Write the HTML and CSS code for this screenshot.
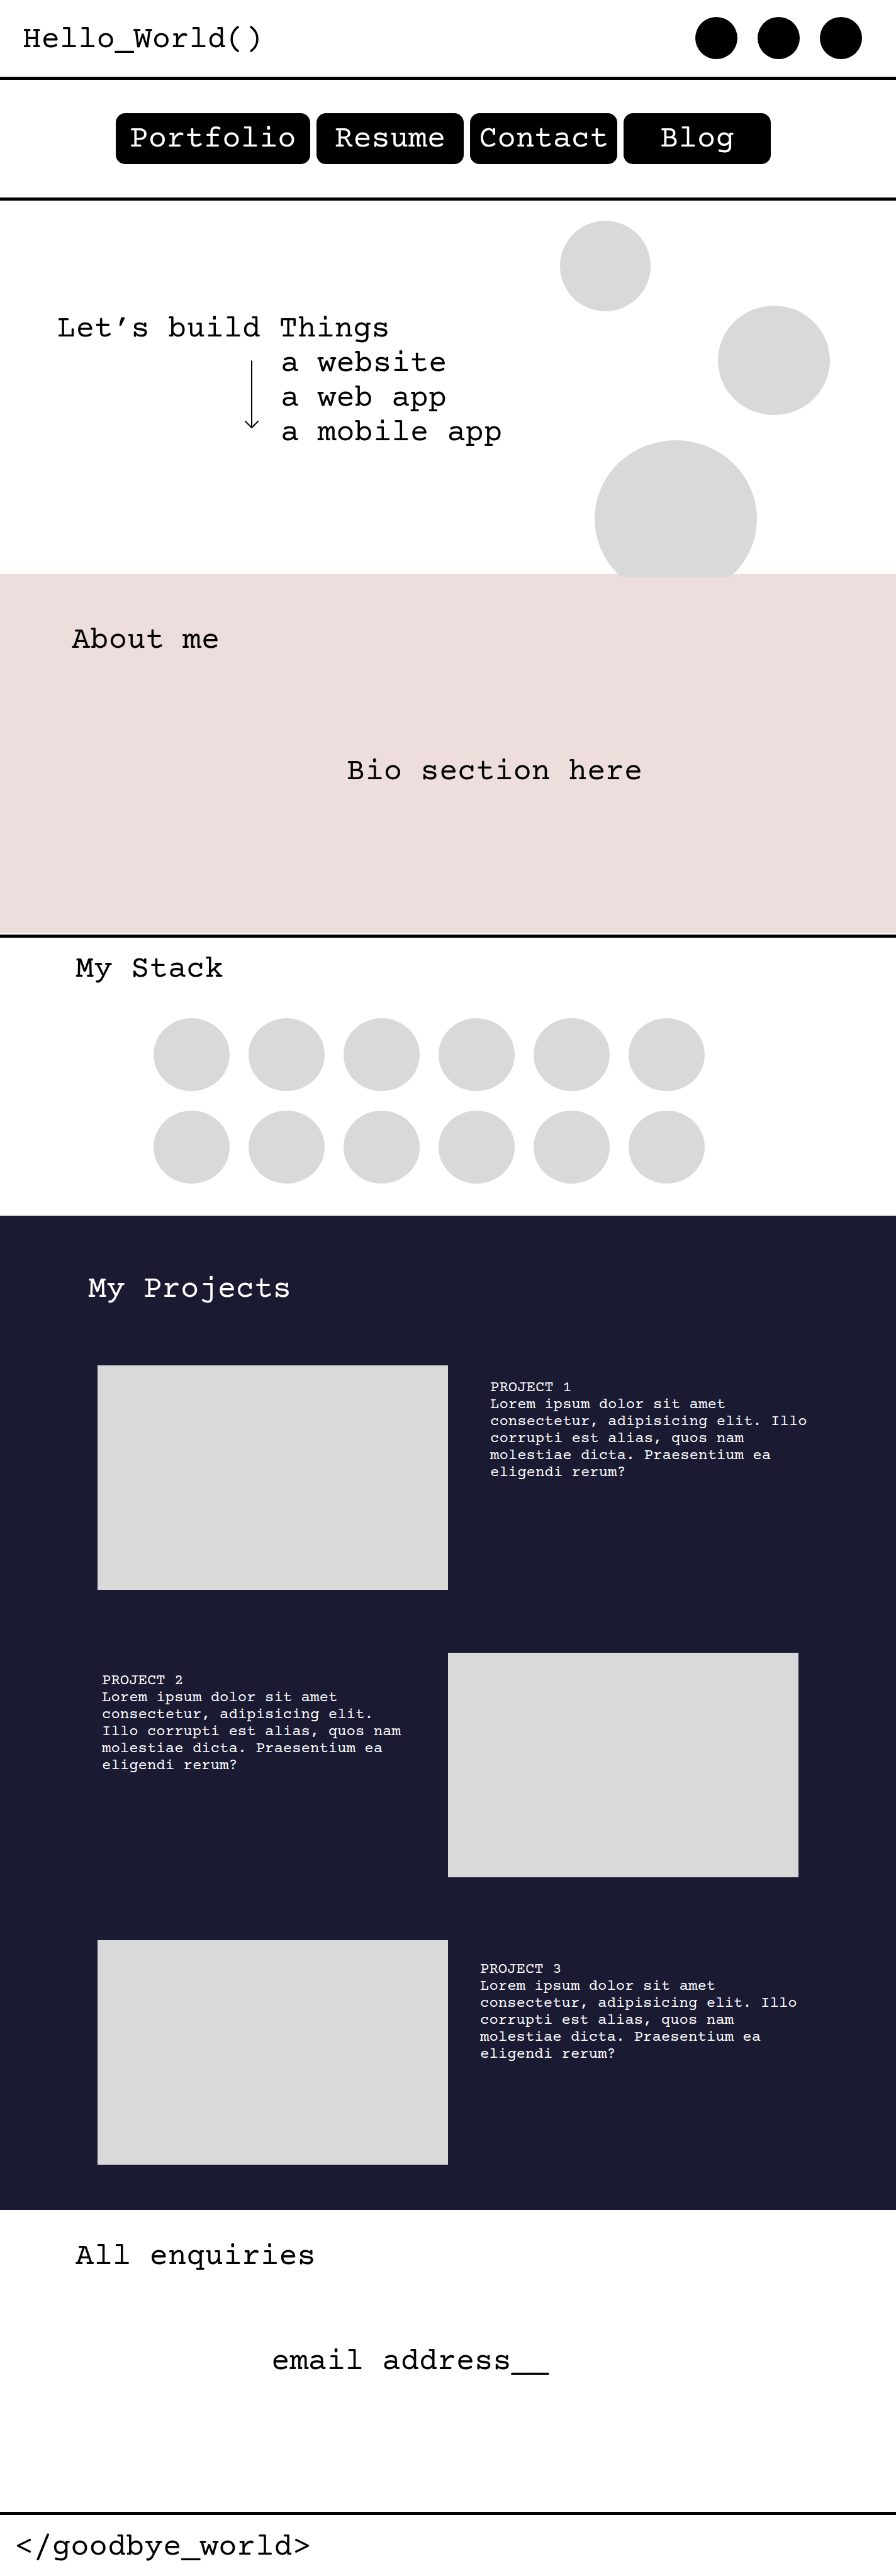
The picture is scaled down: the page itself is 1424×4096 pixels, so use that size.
FILE: index.html
```html
<!DOCTYPE html>
<html lang="en">
<head>
  <meta charset="utf-8">
  <meta name="viewport" content="width=device-width, initial-scale=1">
  <title>Hello_World()</title>
  <link rel="stylesheet" href="styles.css">
</head>
<body>
  <header class="header">
    <h1 class="title">Hello_World()</h1>
    <div class="dots">
      <span class="dot"></span>
      <span class="dot"></span>
      <span class="dot"></span>
    </div>
  </header>

  <nav class="nav">
    <a class="nav-link nav-link-wide" href="#projects">Portfolio</a>
    <a class="nav-link" href="#about">Resume</a>
    <a class="nav-link" href="#contact">Contact</a>
    <a class="nav-link" href="#stack">Blog</a>
  </nav>

  <main>
    <section class="hero">
      <div class="hero-text">
        <p>Let’s build Things</p>
        <div class="hero-things">
          <svg class="arrow" width="24" height="109" viewBox="0 0 24 109" fill="none" stroke="#000" stroke-width="2" stroke-linecap="round" stroke-linejoin="round" aria-hidden="true">
            <path d="M12 1V107M2 97L12 107L22 97"/>
          </svg>
          <ul class="things">
            <li>a website</li>
            <li>a web app</li>
            <li>a mobile app</li>
          </ul>
        </div>
      </div>
      <svg class="bubbles" width="430" height="566" viewBox="0 0 430 566" fill="#d9d9d9" aria-hidden="true">
        <circle cx="72" cy="72" r="72"/>
        <ellipse cx="340" cy="222" rx="89" ry="87"/>
        <ellipse cx="184" cy="474" rx="129" ry="125"/>
      </svg>
    </section>

    <section class="about" id="about">
      <h2 class="title">About me</h2>
      <p class="bio">Bio section here</p>
    </section>

    <section class="stack" id="stack">
      <h2 class="title">My Stack</h2>
      <div class="stack-grid">
        <span class="tech"></span><span class="tech"></span><span class="tech"></span>
        <span class="tech"></span><span class="tech"></span><span class="tech"></span>
        <span class="tech"></span><span class="tech"></span><span class="tech"></span>
        <span class="tech"></span><span class="tech"></span><span class="tech"></span>
      </div>
    </section>

    <section class="projects" id="projects">
      <h2 class="title projects-title">My Projects</h2>
      <div class="project-list">
        <article class="project">
          <div class="shot"></div>
          <div class="blurb blurb-first">
            <h3 class="project-name">PROJECT 1</h3>
            <p>Lorem ipsum dolor sit amet consectetur, adipisicing elit. Illo corrupti est alias, quos nam molestiae dicta. Praesentium ea eligendi rerum?</p>
          </div>
        </article>
        <article class="project">
          <div class="blurb blurb-left">
            <h3 class="project-name">PROJECT 2</h3>
            <p>Lorem ipsum dolor sit amet consectetur, adipisicing elit. Illo corrupti est alias, quos nam molestiae dicta. Praesentium ea eligendi rerum?</p>
          </div>
          <div class="shot"></div>
        </article>
        <article class="project">
          <div class="shot"></div>
          <div class="blurb blurb-last">
            <h3 class="project-name">PROJECT 3</h3>
            <p>Lorem ipsum dolor sit amet consectetur, adipisicing elit. Illo corrupti est alias, quos nam molestiae dicta. Praesentium ea eligendi rerum?</p>
          </div>
        </article>
      </div>
    </section>

    <section class="contact" id="contact">
      <h2 class="title">All enquiries</h2>
      <p class="email">email address__</p>
    </section>
  </main>

  <footer class="footer">&lt;/goodbye_world&gt;</footer>
</body>
</html>
```

FILE: styles.css
```css
* {
  box-sizing: border-box;
  margin: 0;
  padding: 0;
}

body {
  background: #fff;
  color: #000;
  font-family: "Courier Prime", "Liberation Mono", monospace;
  font-size: 49px;
  line-height: 55px;
}

.title {
  font-size: 49px;
  font-weight: 400;
}

/* Header */
.header {
  display: flex;
  align-items: flex-start;
  justify-content: space-between;
  padding: 27px 54px 28px 36px;
  border-bottom: 5px solid #000;
}

.header .title {
  padding-top: 10px;
}

.dots {
  display: flex;
  gap: 32px;
}

.dot {
  width: 67px;
  height: 67px;
  border-radius: 50%;
  background: #000;
}

/* Navigation */
.nav {
  display: flex;
  gap: 10px;
  padding: 53px 184px;
  border-bottom: 5px solid #000;
}

.nav-link {
  width: 234px;
  padding: 15px 0 11px;
  border-radius: 15px;
  background: #000;
  color: #fff;
  text-align: center;
  text-decoration: none;
}

.nav-link-wide {
  width: 309px;
}

/* Hero: the bubbles run slightly over the section below */
.hero {
  display: flex;
  align-items: flex-start;
  justify-content: space-between;
  position: relative;
  z-index: 1;
  padding: 32px 104px 0 91px;
}

.hero-text {
  padding-top: 146px;
}

.hero-things {
  display: flex;
  gap: 34px;
  padding-left: 297px;
}

.arrow {
  margin-top: 21px;
}

.things {
  list-style: none;
}

.bubbles {
  display: block;
  margin-bottom: -4px;
}

/* About */
.about {
  padding: 79px 114px 228px;
  background: #eddddd;
}

.bio {
  padding: 154px 0 0 437px;
}

/* Stack */
.stack {
  margin-top: 2px;
  padding: 24px 120px 51px;
  border-top: 5px solid #000;
}

.stack-grid {
  display: grid;
  grid-template-columns: repeat(6, 121px);
  gap: 31px 30px;
  padding: 49px 0 0 124px;
}

.tech {
  height: 116px;
  border-radius: 50%;
  background: #d9d9d9;
}

/* Projects */
.projects {
  padding: 91px 155px 72px;
  background: #1a1a33;
  color: #fff;
}

.projects-title {
  margin-left: -15px;
}

.project-list {
  display: grid;
  gap: 100px;
  padding-top: 92px;
}

.project {
  display: grid;
  grid-template-columns: repeat(2, minmax(0, 1fr));
  font-size: 24px;
  line-height: 27px;
}

.project-name {
  font-size: 24px;
  font-weight: 400;
}

.shot {
  height: 357px;
  background: #d9d9d9;
}

.blurb {
  width: 36ch;
}

.blurb-first {
  margin: 22px 0 0 67px;
}

.blurb-left {
  width: 34ch;
  margin: 31px 0 0 7px;
}

.blurb-last {
  margin: 33px 0 0 51px;
}

/* Contact */
.contact {
  padding: 48px 120px 210px;
}

.email {
  padding: 112px 0 0 311px;
}

/* Footer */
.footer {
  padding: 25px 24px 17px;
  border-top: 5px solid #000;
}
```
